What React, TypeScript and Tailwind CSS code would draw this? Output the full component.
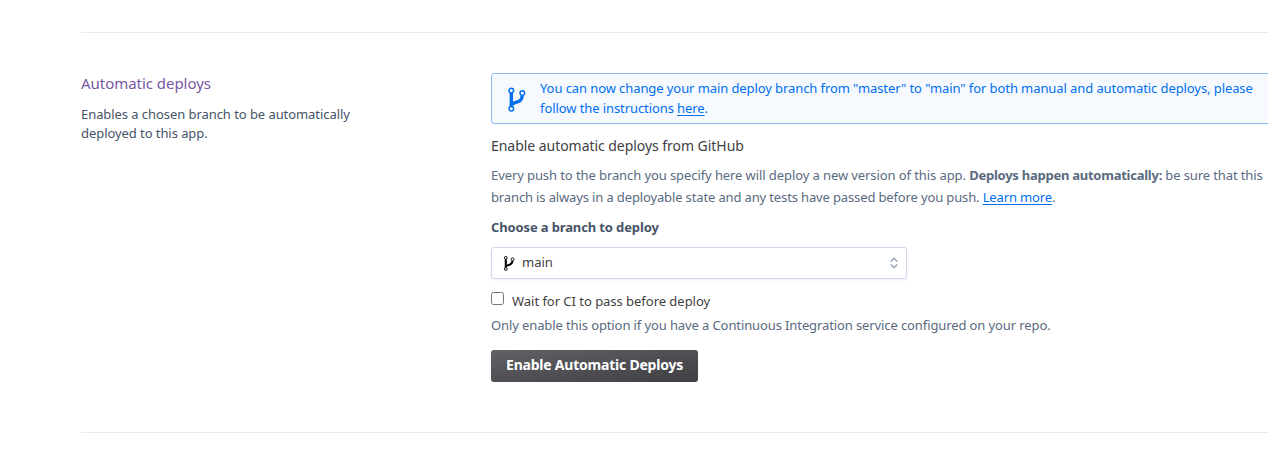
function BranchIcon({ className }: { className: string }) {
  return (
    <svg className={className} viewBox="0 0 19 26" fill="none" stroke="currentColor">
      <path d="M4.300 7V21" strokeWidth="3.400" />
      <path d="M4.300 19.500C5.500 14.500 15 18.500 15.200 9.500" strokeWidth="3.400" />
      <circle cx="4.300" cy="4.600" r="2.300" fill="white" strokeWidth="1.500" />
      <circle cx="15.300" cy="7" r="2.300" fill="white" strokeWidth="1.500" />
      <circle cx="4.300" cy="22.800" r="2.300" fill="white" strokeWidth="1.500" />
    </svg>
  );
}

export default function App() {
  return (
    <div className="h-[457px] w-[1268px] overflow-hidden bg-white pl-[81px] pt-8 font-['Noto_Sans',sans-serif] text-[13px] text-[#3f3f44]">
      <section className="flex h-[401px] border-y border-[#e9eaf2] pt-10">
        <div className="w-[410px] shrink-0 whitespace-nowrap text-[#475468]">
          <h2 className="text-[15px] leading-5 tracking-[-0.04px] text-[#79589f]">Automatic deploys</h2>
          <p className="mt-3 leading-[19px] tracking-[-0.065px]">
            Enables a chosen branch to be automatically
            <br />
            deployed to this app.
          </p>
        </div>
        <div className="w-[800px] shrink-0 whitespace-nowrap">
          <div className="flex h-[51px] items-center rounded-[3px] border border-[#8bbcf0] bg-[#f6f9fe] pl-[15px] text-[#0070ee]">
            <BranchIcon className="h-[26px] w-[19px]" />
            <p className="ml-[14px] pb-0.5 leading-5 tracking-[-0.088px]">
              You can now change your main deploy branch from "master" to "main" for both manual and automatic deploys, please
              <br />
              follow the instructions <a className="underline underline-offset-2">here</a>.
            </p>
          </div>
          <h3 className="mt-3 text-[14px] leading-5 tracking-[-0.045px]">Enable automatic deploys from GitHub</h3>
          <p className="mt-2 leading-[22px] text-[#5a6a80]">
            <span className="tracking-[-0.09px]">Every push to the branch you specify here will deploy a new version of this app. </span>
            <b className="tracking-[-0.25px]">Deploys happen automatically:</b>
            <span className="tracking-[-0.11px]"> be sure that this</span>
            <br />
            <span className="tracking-[-0.138px]">
              branch is always in a deployable state and any tests have passed before you push. <a className="text-[#0070ee] underline underline-offset-2">Learn more</a>.
            </span>
          </p>
          <h4 className="mt-[9px] font-bold leading-5 tracking-[-0.13px] text-[#475468]">Choose a branch to deploy</h4>
          <button className="mt-[10px] flex h-8 w-[416px] items-center rounded-[3px] border border-[#cfd7e9] bg-white pl-[11px] pr-2 shadow-[0_1px_2px_rgba(207,215,233,0.4)]">
            <BranchIcon className="h-[16px] w-3 text-black" />
            <span className="ml-[7px]">main</span>
            <svg className="ml-auto h-3 w-2" viewBox="0 0 8 12" fill="none" stroke="#97a3b6" strokeWidth="1.500">
              <path d="M.7 4.500 4 1.300 7.300 4.500M.7 7.500 4 10.700 7.300 7.500" />
            </svg>
          </button>
          <label className="mt-3 flex h-5 leading-5">
            <input type="checkbox" className="mt-px h-[13px] w-[13px] shrink-0" />
            <span className="ml-2 tracking-[-0.03px]">Wait for CI to pass before deploy</span>
          </label>
          <p className="mt-1 leading-5 tracking-[-0.107px] text-[#5a6a80]">Only enable this option if you have a Continuous Integration service configured on your repo.</p>
          <button className="mt-[15px] flex h-8 w-[207px] justify-center rounded-[3px] bg-linear-to-br from-[#606065] to-[#404044] pt-[5px] text-[14px] font-bold leading-5 tracking-[-0.22px] text-white">Enable Automatic Deploys</button>
        </div>
      </section>
    </div>
  );
}
